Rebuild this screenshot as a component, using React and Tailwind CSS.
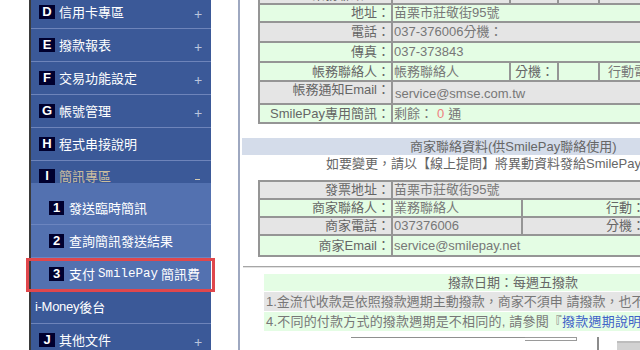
import React from 'react';

const mainTop = [
  { key: 'D', label: '信用卡專區' },
  { key: 'E', label: '撥款報表' },
  { key: 'F', label: '交易功能設定' },
  { key: 'G', label: '帳號管理' },
];

const subItems = [
  { key: '1', label: '發送臨時簡訊' },
  { key: '2', label: '查詢簡訊發送結果' },
];

function Badge({ ch, small }) {
  return (
    <span
      className={`${small ? 'w-[15px]' : 'w-[16px]'} h-[14px] shrink-0 bg-[#00002e] text-white font-bold text-[13px] leading-[14px] flex items-center justify-center font-['Liberation_Sans',sans-serif]`}
    >
      {ch}
    </span>
  );
}

function MainRow({ ch, label, sign = '+' }) {
  return (
    <div className="h-[33px] border-b border-[#6e84ba] flex items-center pl-[8px] pr-[9px]">
      <Badge ch={ch} />
      <span className="ml-[4px] text-white flex-1">{label}</span>
      {sign && <span className="text-[#b9c5de] text-[14px] mt-[4px]">{sign}</span>}
    </div>
  );
}

function SubRow({ ch, children }) {
  return (
    <div className="h-[33px] border-b border-[#6c85bf] flex items-center pl-[18px]">
      <Badge ch={ch} small />
      <span className="ml-[5px] text-white flex items-center">{children}</span>
    </div>
  );
}

function Sidebar() {
  return (
    <aside className="w-[182px] shrink-0 border-l-2 border-[#3a3a3a] bg-[#3b5998] font-['Noto_Sans_CJK_TC',sans-serif] text-[13px]">
      <div className="-mt-[4px]">
        {mainTop.map((m) => (
          <MainRow key={m.key} ch={m.key} label={m.label} />
        ))}
        <MainRow ch="H" label="程式串接說明" sign={null} />
        <div className="h-[22px] flex items-start pt-[8px] pl-[8px] pr-[11px]">
          <Badge ch="I" />
          <span className="ml-[4px] text-[#cbbd9e] flex-1 leading-[14px]">簡訊專區</span>
          <span className="w-[5px] h-[1px] bg-[#d8ccb0] mt-[10px]" />
        </div>
        <div className="bg-[#5371b0] pt-[9px]">
          {subItems.map((s) => (
            <SubRow key={s.key} ch={s.key}>
              {s.label}
            </SubRow>
          ))}
          <SubRow ch="3">
            支付
            <span className="font-['Liberation_Mono',monospace] text-[12.5px] px-[3px]">SmilePay</span>
            簡訊費
          </SubRow>
        </div>
        <div className="h-[33px] border-b border-[#6e84ba] flex items-center pl-[4px] text-white">
          <span className="font-['Liberation_Sans',sans-serif] text-[13px] tracking-[-0.3px]">i-Money</span>
          <span>後台</span>
        </div>
        <MainRow ch="J" label="其他文件" />
      </div>
    </aside>
  );
}

const green = 'bg-[#e4fde4]';
const gray = 'bg-[#e5e5e5]';
const lab = 'text-right pr-[1px] text-[#666] whitespace-nowrap overflow-hidden';
const val = 'pl-[1px] text-[#777] whitespace-nowrap overflow-hidden';

function AccountTable() {
  return (
    <table className="-mt-[18px] table-fixed w-[560px] border-separate border-spacing-[2px] bg-[#959595] text-[13px] leading-[16px]">
      <colgroup>
        <col className="w-[131px]" />
        <col className="w-[116px]" />
        <col className="w-[46px]" />
        <col className="w-[39px]" />
        <col className="w-[100px]" />
        <col className="w-[116px]" />
      </colgroup>
      <tbody>
        <tr className={gray}>
          <td className={`${lab} h-[17px] align-top pt-[3px]`}>業務聯絡人：</td>
          <td className={val}>業務聯絡人</td>
          <td className={lab}>分機：</td>
          <td className={val}></td>
          <td className={`${val} pl-[6px]`}>行動電話：</td>
          <td className={val}></td>
        </tr>
        <tr className={green}>
          <td className={`${lab} h-[16px]`}>地址：</td>
          <td className={val} colSpan={5}>苗栗市莊敬街95號</td>
        </tr>
        <tr className={gray}>
          <td className={`${lab} h-[18px]`}>電話：</td>
          <td className={val} colSpan={5}>037-376006分機：</td>
        </tr>
        <tr className={green}>
          <td className={`${lab} h-[18px]`}>傳真：</td>
          <td className={val} colSpan={5}>037-373843</td>
        </tr>
        <tr className={green}>
          <td className={`${lab} h-[17px]`}>帳務聯絡人：</td>
          <td className={val}>帳務聯絡人</td>
          <td className="pl-[4px] text-[#666] whitespace-nowrap">分機：</td>
          <td className={val}></td>
          <td className={`${val} pl-[8px]`}>行動電話：</td>
          <td className={val}></td>
        </tr>
        <tr className={gray}>
          <td className={`${lab} h-[21px] align-top`}>帳務通知Email：</td>
          <td className={`${val} align-bottom pb-[1px] pl-[2px]`} colSpan={5}>service@smse.com.tw</td>
        </tr>
        <tr className={green}>
          <td className={`${lab} h-[17px]`}>SmilePay專用簡訊：</td>
          <td className={val} colSpan={5}>
            剩餘：<span className="text-[#f08080] px-[4px]">0</span>通
          </td>
        </tr>
      </tbody>
    </table>
  );
}

function MerchantTable() {
  return (
    <table className="mt-[7px] table-fixed w-[520px] border-separate border-spacing-[2px] bg-[#959595] text-[13px] leading-[16px]">
      <colgroup>
        <col className="w-[131px]" />
        <col className="w-[128px]" />
        <col className="w-[123px]" />
        <col className="w-[130px]" />
      </colgroup>
      <tbody>
        <tr className={gray}>
          <td className={`${lab} h-[15px]`}>發票地址：</td>
          <td className={val} colSpan={3}>苗栗市莊敬街95號</td>
        </tr>
        <tr className={green}>
          <td className={`${lab} h-[16px]`}>商家聯絡人：</td>
          <td className={val}>業務聯絡人</td>
          <td className={lab}>行動：</td>
          <td className={val}></td>
        </tr>
        <tr className={gray}>
          <td className={`${lab} h-[16px]`}>商家電話：</td>
          <td className={val}>037376006</td>
          <td className={lab}>分機：</td>
          <td className={val}></td>
        </tr>
        <tr className={green}>
          <td className={`${lab} h-[19px]`}>商家Email：</td>
          <td className={val} colSpan={3}>service@smilepay.net</td>
        </tr>
      </tbody>
    </table>
  );
}

function PayoutBox() {
  return (
    <div className="mt-[6px] ml-[6px] w-[600px] text-[13px] text-[#777] whitespace-nowrap">
      <div className={`${green} h-[17px] leading-[17px] pl-[184px] text-[#666]`}>撥款日期：每週五撥款</div>
      <div className={`${gray} mt-[1px] h-[19px] leading-[19px] pl-[2px]`}>
        1.金流代收款是依照撥款週期主動撥款，商家不須申 請撥款，也不須另行通知
      </div>
      <div className={`${green} mt-[1px] h-[19px] leading-[19px] pl-[2px] tracking-[0.2px]`}>
        4.不同的付款方式的撥款週期是不相同的, 請參閱『<span className="text-[#3f63c8]">撥款週期說明</span>』
      </div>
    </div>
  );
}

export default function App() {
  return (
    <div className="relative w-[640px] h-[350px] overflow-hidden bg-white flex font-['Liberation_Sans','Noto_Sans_CJK_TC',sans-serif]">
      <div className="w-[29px] shrink-0" />
      <Sidebar />
      <div className="flex-1 min-w-0 overflow-hidden">
        <div className="w-[900px] h-[350px] flex">
          <div className="w-[27px] shrink-0" />
          <div className="w-[2px] shrink-0 bg-[#9ea8c0]" />
          <div className="flex-1 pl-[18px]">
            <AccountTable />
            <div className="mt-[14px] -ml-[16px] h-[17px] leading-[17px] bg-[#d4dcea] text-[13px] text-[#666] pl-[168px] whitespace-nowrap">
              商家聯絡資料(供SmilePay聯絡使用)
            </div>
            <div className="h-[18px] leading-[18px] text-[13px] text-[#666] pl-[68px] whitespace-nowrap">
              如要變更，請以【線上提問】將異動資料發給SmilePay更新
            </div>
            <MerchantTable />
            <div className="mt-[9px] -ml-[15px] w-[520px] border-t border-b border-t-[#a6a6a6] border-b-[#e2e2e2]" />
            <PayoutBox />
            <div className="mt-[6px] flex h-[20px]">
              <div className="ml-[93px] w-[174px] border-t border-[#8f8f8f]" />
              <div className="w-[52px] h-[4px] border-t border-b border-r border-[#9a9a9a]" />
              <div className="ml-[20px] w-[2px] bg-[#8c8c8c]" />
              <div className="ml-[18px] w-[40px] mt-[4px] bg-[#d2d2d2] border-t-2 border-[#bdbdbd]" />
            </div>
          </div>
        </div>
      </div>
      <div className="absolute left-[26px] top-[258px] w-[189px] h-[34px] border-[3px] border-[#e0474c]" />
    </div>
  );
}
